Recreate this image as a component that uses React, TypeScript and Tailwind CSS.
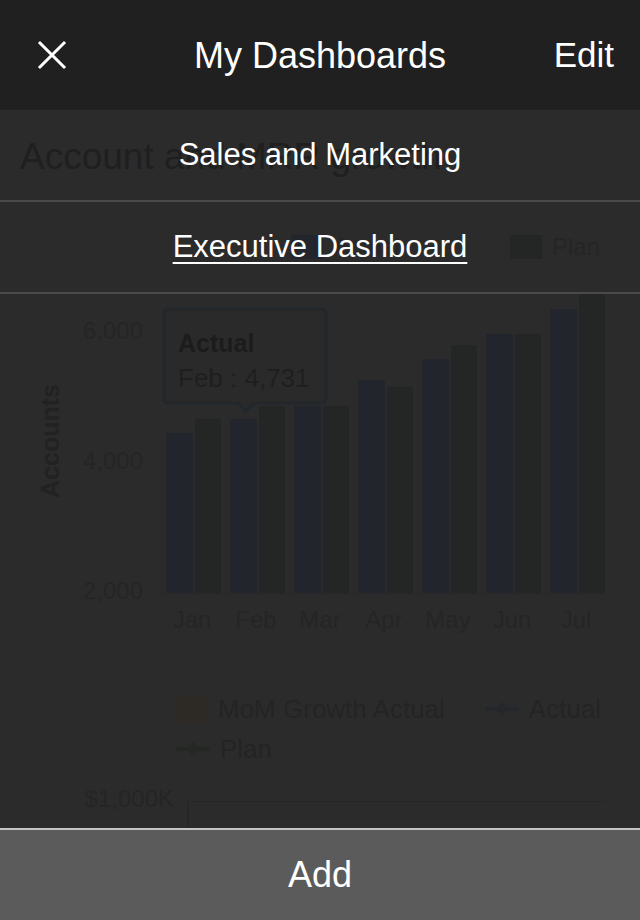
import React from 'react';

const months = ['Jan', 'Feb', 'Mar', 'Apr', 'May', 'Jun', 'Jul'];
// tops of bars in px (chart baseline at 300 within svg)
const actualTops = [140, 126, 113, 87, 66, 41, 16];
const planTops = [126, 113, 113, 94, 52, 41, 0];

function BarChart() {
  const base = 300;
  return (
    <svg width="640" height="345" viewBox="0 0 640 345" className="block">
      <g fontFamily="Liberation Sans, Arial, sans-serif" fontSize="24" fill="#252525">
        <text x="143" y="46" textAnchor="end">6,000</text>
        <text x="143" y="176" textAnchor="end">4,000</text>
        <text x="143" y="306" textAnchor="end">2,000</text>
        <text
          x="0"
          y="0"
          transform="translate(59 148) rotate(-90)"
          textAnchor="middle"
          fontWeight="bold"
          fontSize="25"
          fill="#222222"
        >
          Accounts
        </text>
        {months.map((m, i) => (
          <text key={m} x={192 + i * 64} y="335" textAnchor="middle">
            {m}
          </text>
        ))}
      </g>
      {months.map((m, i) => {
        const gx = 160 + i * 64;
        return (
          <g key={m}>
            <rect x={gx + 6} y={actualTops[i]} width="27" height={base - actualTops[i]} fill="#22262c" />
            <rect x={gx + 35} y={planTops[i]} width="26" height={base - planTops[i]} fill="#232624" />
          </g>
        );
      })}
      <line x1="160" y1={base + 1} x2="606" y2={base + 1} stroke="#292929" strokeWidth="2" />
      {/* tooltip */}
      <g>
        <path
          d="M168 16 H322 a4 4 0 0 1 4 4 V106 a4 4 0 0 1 -4 4 H254 L246 118 L238 110 H168 a4 4 0 0 1 -4 -4 V20 a4 4 0 0 1 4 -4 Z"
          fill="#2a2a2a"
          stroke="#22272b"
          strokeWidth="3"
        />
        <text x="178" y="59" fontFamily="Liberation Sans, Arial, sans-serif" fontSize="25" fontWeight="bold" fill="#1c1c1c">
          Actual
        </text>
        <text x="178" y="94" fontFamily="Liberation Sans, Arial, sans-serif" fontSize="26" fill="#1f1f1f">
          Feb : 4,731
        </text>
      </g>
    </svg>
  );
}

function LineMarker({ color }: { color: string }) {
  return (
    <svg width="34" height="14" viewBox="0 0 34 14">
      <line x1="0" y1="7" x2="34" y2="7" stroke={color} strokeWidth="4" />
      <path d="M17 0 L24 7 L17 14 L10 7 Z" fill={color} />
    </svg>
  );
}

export default function App() {
  return (
    <div
      className="w-[640px] h-[920px] flex flex-col bg-[#2b2b2b] overflow-hidden"
      style={{ fontFamily: '"Liberation Sans", Arial, sans-serif' }}
    >
      {/* Header */}
      <div className="h-[110px] shrink-0 bg-[#202020] flex items-center justify-between px-[26px] text-white">
        <div className="w-[120px] flex items-center">
          <svg width="52" height="52" viewBox="0 0 52 52">
            <path d="M14 14 L38 38 M38 14 L14 38" stroke="#ffffff" strokeWidth="3" strokeLinecap="square" />
          </svg>
        </div>
        <div className="text-[36px] leading-none pt-[2px]">My Dashboards</div>
        <div className="w-[120px] text-right text-[35px] leading-none pb-[2px]">Edit</div>
      </div>

      {/* Content */}
      <div className="relative flex-1 overflow-hidden">
        <div className="flex flex-col">
          <div className="h-[90px] flex items-center pl-[20px] pt-[4px] text-[37px] text-[#1f1f1f] whitespace-nowrap">
            Account and MRR growth
          </div>
          <div className="h-[93px] flex items-center justify-end gap-[10px] pr-[40px] text-[24px] text-[#252525]">
            <div className="flex items-center gap-[10px] mr-[100px]">
              <span className="w-[32px] h-[24px] bg-[#22262c]" />
              <span>Actual</span>
            </div>
            <span className="w-[32px] h-[24px] bg-[#232624]" />
            <span>Plan</span>
          </div>
          <BarChart />
          <div className="pl-[176px] pt-[58px] text-[26px] text-[#242424] leading-none">
            <div className="flex items-center">
              <span className="w-[32px] h-[26px] bg-[#2d2924]" />
              <span className="ml-[10px]">MoM Growth Actual</span>
              <span className="ml-[40px] flex items-center">
                <LineMarker color="#24272c" />
              </span>
              <span className="ml-[10px]">Actual</span>
            </div>
            <div className="flex items-center mt-[14px]">
              <LineMarker color="#252725" />
              <span className="ml-[10px]">Plan</span>
            </div>
          </div>
          <div className="flex mt-[25px]">
            <div className="w-[174px] text-right text-[24px] text-[#252525] leading-none">$1,000K</div>
            <div className="ml-[13px] mt-[14px] flex-1 mr-[34px] border-l-2 border-t border-[#262626] h-[40px]" />
          </div>
        </div>

        {/* Dashboards dropdown */}
        <div className="absolute top-0 left-0 right-0 text-white">
          <div className="h-[92px] flex items-center justify-center border-b-2 border-[#4a4a4a] text-[31px]">
            Sales and Marketing
          </div>
          <div className="h-[92px] flex items-center justify-center border-b-2 border-[#4a4a4a] text-[31px]">
            <span className="underline underline-offset-[5px] decoration-2">Executive Dashboard</span>
          </div>
        </div>
      </div>

      {/* Footer */}
      <div className="h-[92px] shrink-0 bg-[#5b5b5b] border-t-2 border-[#c4c4c4] flex items-center justify-center text-white text-[36px]">
        Add
      </div>
    </div>
  );
}
